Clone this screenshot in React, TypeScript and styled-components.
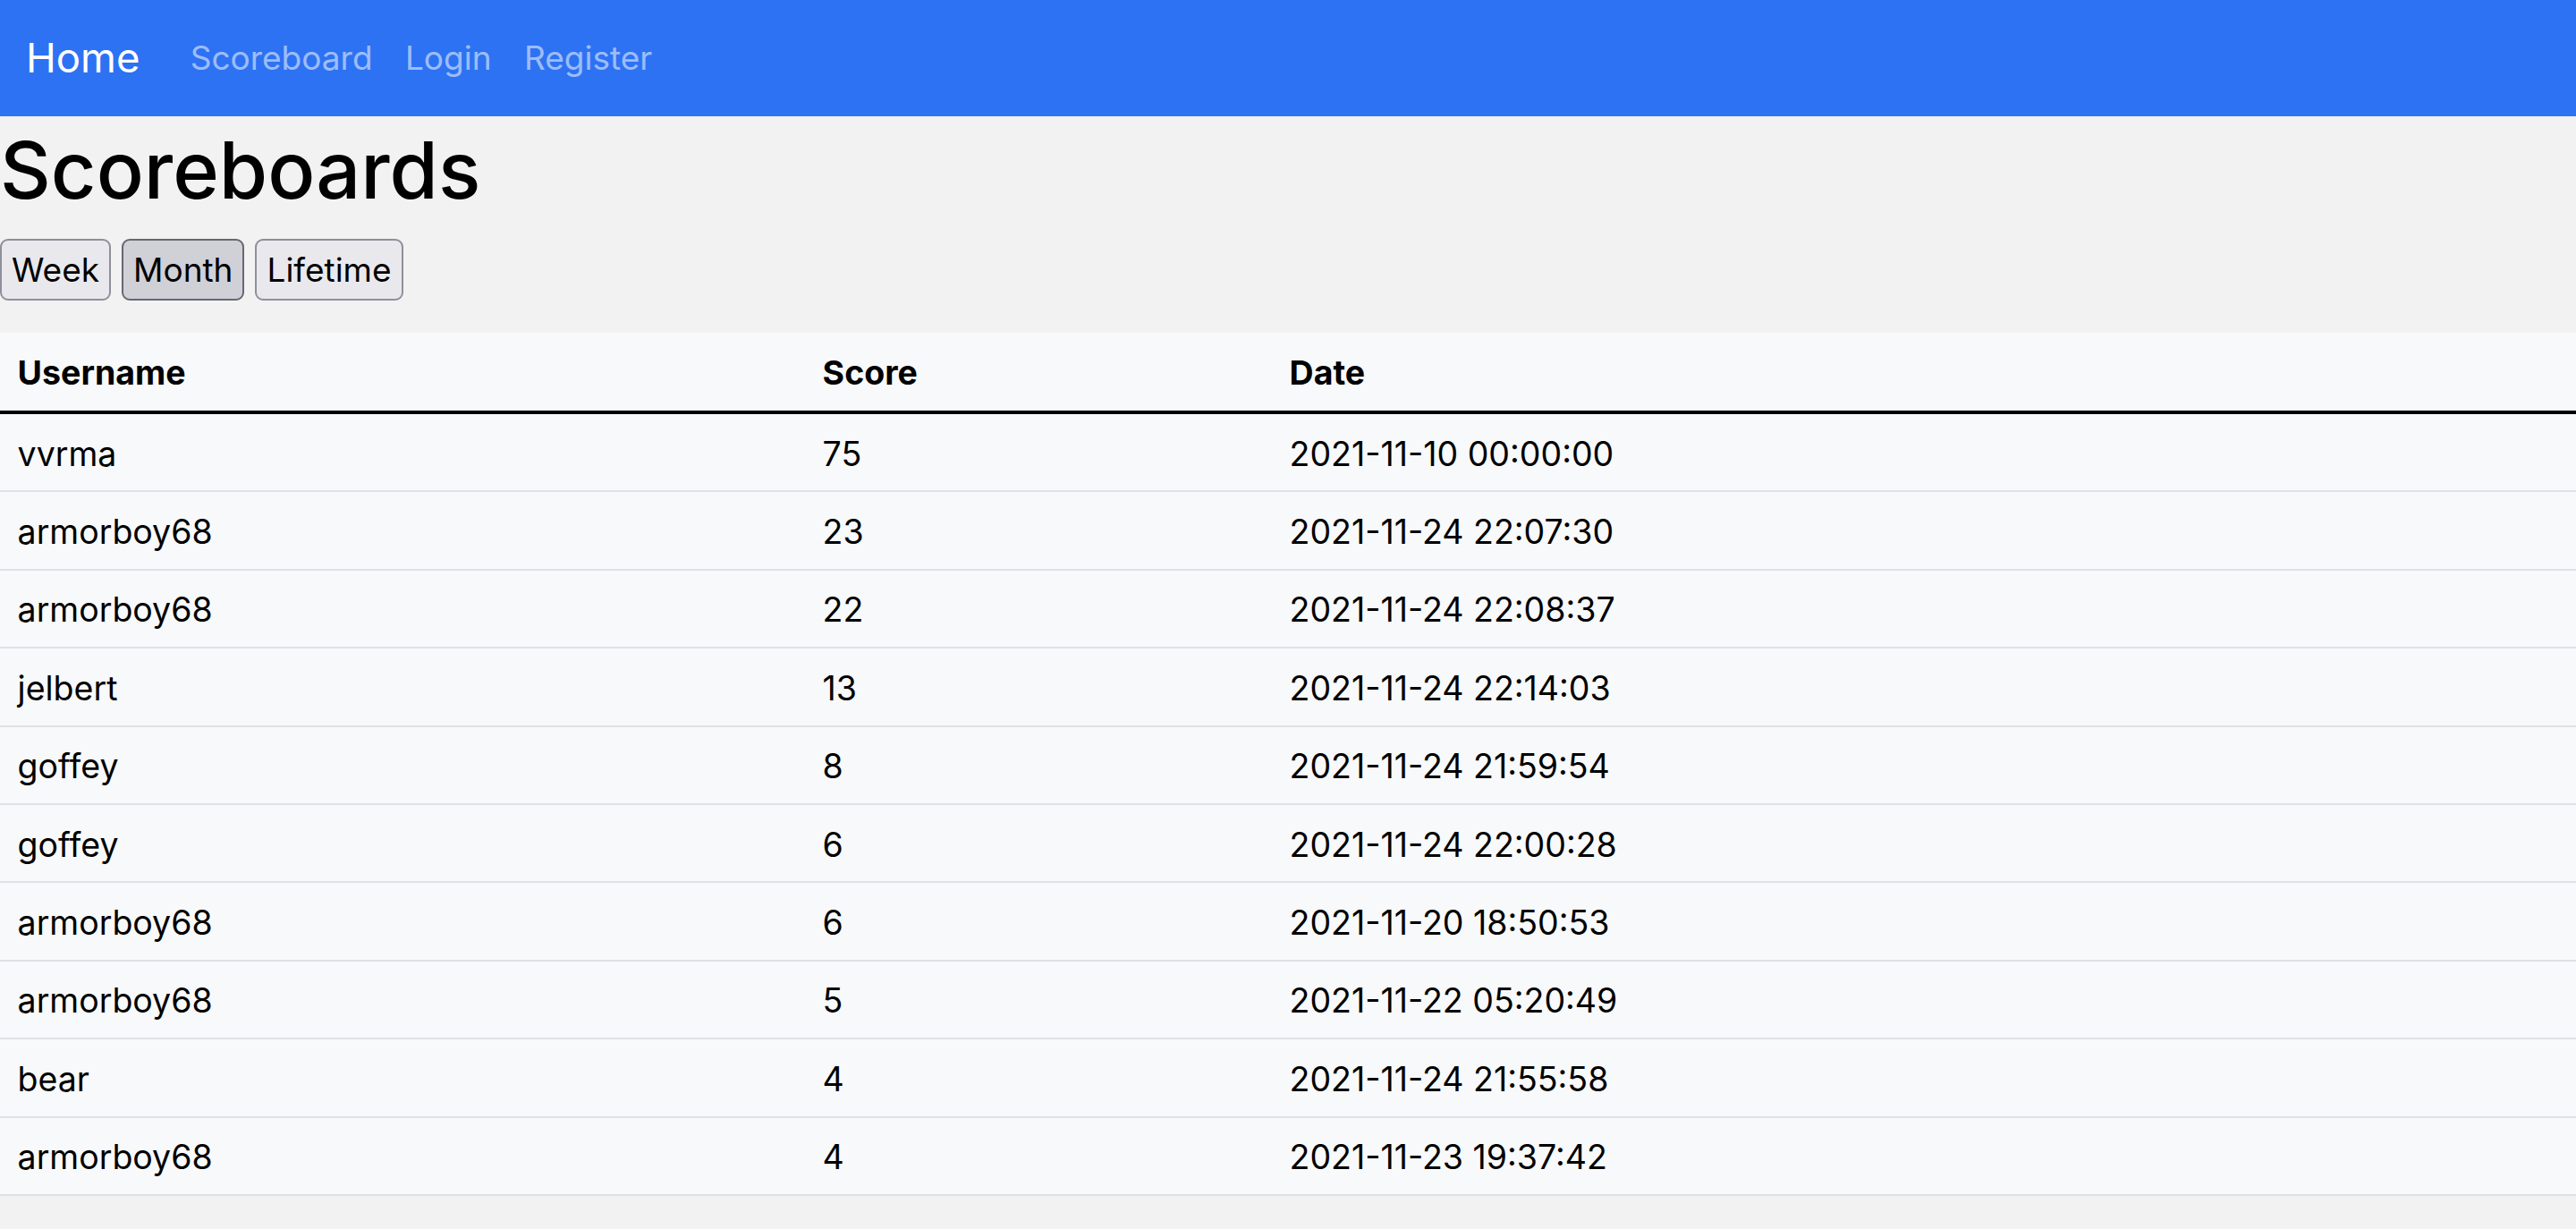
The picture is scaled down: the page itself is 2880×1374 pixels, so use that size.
import React, { useState } from "react";
import styled, { createGlobalStyle } from "styled-components";

const GlobalStyle = createGlobalStyle`
  html, body {
    margin: 0;
    padding: 0;
    background: #f2f2f2;
    color: #000;
    font-family: Inter, "Noto Sans", "Liberation Sans", sans-serif;
  }
  * { box-sizing: border-box; }
`;

const Navbar = styled.nav`
  height: 130px;
  background: #2d72f3;
  display: flex;
  align-items: center;
  padding: 0 29px;
`;

const Brand = styled.a`
  font-size: 45.5px;
  line-height: 66px;
  color: #fff;
  text-decoration: none;
  margin-right: 38px;
`;

const NavList = styled.div`
  display: flex;
  align-items: center;
`;

const NavLink = styled.a`
  font-size: 37px;
  line-height: 52.8px;
  color: rgba(255, 255, 255, 0.55);
  text-decoration: none;
  padding: 0 18.2px;
`;

const Main = styled.main`
  padding-top: 8px;
`;

const Title = styled.h1`
  margin: 0 0 23px 0;
  font-size: 88px;
  font-weight: 500;
  line-height: 1.2;
`;

const FilterBar = styled.div`
  display: flex;
  gap: 12px;
  margin-bottom: 36px;
`;

const PeriodButton = styled.button<{ $active?: boolean }>`
  font-family: inherit;
  font-size: 37px;
  line-height: 45px;
  padding: 10px 11px;
  color: #000;
  border-radius: 9px;
  border: 2px solid ${(p) => (p.$active ? "#676774" : "#8f8f9d")};
  background: ${(p) => (p.$active ? "#d0d0d7" : "#e9e9ed")};
  cursor: pointer;
`;

const Table = styled.table`
  width: 100%;
  border-collapse: collapse;
  table-layout: fixed;
  background: #f8f9fa;
  font-size: 37.5px;
`;

const HeadCell = styled.th`
  text-align: left;
  font-weight: 700;
  padding: 20.5px 19.6px 16.5px;
  line-height: 50.4px;
  border-bottom: 4.4px solid #000;
`;

const Cell = styled.td`
  padding: 19.6px 19.6px 15.4px;
  line-height: 50.4px;
  border-bottom: 2px solid #dee2e6;
`;

const rows: [string, number, string][] = [
  ["vvrma", 75, "2021-11-10 00:00:00"],
  ["armorboy68", 23, "2021-11-24 22:07:30"],
  ["armorboy68", 22, "2021-11-24 22:08:37"],
  ["jelbert", 13, "2021-11-24 22:14:03"],
  ["goffey", 8, "2021-11-24 21:59:54"],
  ["goffey", 6, "2021-11-24 22:00:28"],
  ["armorboy68", 6, "2021-11-20 18:50:53"],
  ["armorboy68", 5, "2021-11-22 05:20:49"],
  ["bear", 4, "2021-11-24 21:55:58"],
  ["armorboy68", 4, "2021-11-23 19:37:42"],
];

export default function App() {
  const [period, setPeriod] = useState("Month");
  return (
    <>
      <GlobalStyle />
      <Navbar>
        <Brand href="#">Home</Brand>
        <NavList>
          <NavLink href="#">Scoreboard</NavLink>
          <NavLink href="#">Login</NavLink>
          <NavLink href="#">Register</NavLink>
        </NavList>
      </Navbar>
      <Main>
        <Title>Scoreboards</Title>
        <FilterBar>
          {["Week", "Month", "Lifetime"].map((p) => (
            <PeriodButton key={p} $active={p === period} onClick={() => setPeriod(p)}>
              {p}
            </PeriodButton>
          ))}
        </FilterBar>
        <Table>
          <colgroup>
            <col style={{ width: 900 }} />
            <col style={{ width: 522 }} />
            <col />
          </colgroup>
          <thead>
            <tr>
              <HeadCell>Username</HeadCell>
              <HeadCell>Score</HeadCell>
              <HeadCell>Date</HeadCell>
            </tr>
          </thead>
          <tbody>
            {rows.map(([u, s, d], i) => (
              <tr key={i}>
                <Cell>{u}</Cell>
                <Cell>{s}</Cell>
                <Cell>{d}</Cell>
              </tr>
            ))}
          </tbody>
        </Table>
      </Main>
    </>
  );
}
